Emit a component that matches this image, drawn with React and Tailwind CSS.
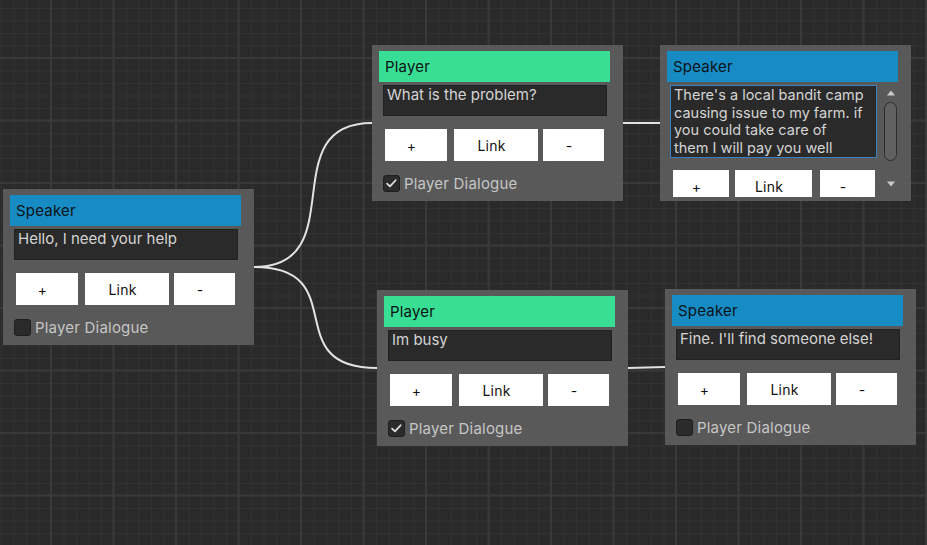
import React from "react";

const FONT = "font-['Inter','Noto_Sans',sans-serif]";

function Check() {
  return (
    <svg width="17" height="17" viewBox="0 0 17 17" className="block">
      <path d="M3.5 8.6 L6.8 11.8 L13.2 4.8" fill="none" stroke="#e2e2e2" strokeWidth="2" strokeLinecap="round" strokeLinejoin="round" />
    </svg>
  );
}

function Buttons({ widths = [62, 84, 61], gaps = [7, 5], h = 32 }) {
  const labels = ["+", "Link", "-"];
  return (
    <div className="flex">
      {labels.map((l, i) => (
        <div
          key={l}
          style={{ width: widths[i], height: h, marginLeft: i === 0 ? 0 : gaps[i - 1] }}
          className="bg-white flex items-center justify-center pr-[9px] text-[14px] tracking-[0.2px] text-[#111] shrink-0"
        >
          {l}
        </div>
      ))}
    </div>
  );
}

function Node({ left, top, title, color, text, checked }) {
  return (
    <div
      style={{ left, top }}
      className={`absolute w-[251px] h-[156px] bg-[rgba(92,92,92,0.93)] pl-[7px] pt-[6px] ${FONT}`}
    >
      <div className={`w-[231px] h-[31px] ${color} flex items-center pl-[6px] pt-[2px] text-[15px] tracking-[0.2px] text-[#0c1216]`}>
        {title}
      </div>
      <div className="ml-[4px] mt-[3px] w-[224px] h-[31px] bg-[#2a2a2a] border border-[#212121] pl-[3px] text-[15px] leading-[18px] text-[#d4d4d4]">
        {text}
      </div>
      <div className="ml-[6px] mt-[13px]">
        <Buttons />
      </div>
      <div className="ml-[4px] mt-[13px] flex items-center">
        <div className="w-[17px] h-[17px] rounded-[3px] bg-[#2b2b2b] border border-[#1e1e1e] flex items-center justify-center">
          {checked ? <Check /> : null}
        </div>
        <span className="ml-[4px] text-[15px] tracking-[0.2px] text-[#c6c6c6] leading-[18px] mt-[1px]">Player Dialogue</span>
      </div>
    </div>
  );
}

function ScrollNode({ left, top }) {
  return (
    <div
      style={{ left, top }}
      className={`absolute w-[251px] h-[156px] bg-[rgba(92,92,92,0.93)] pl-[7px] pt-[6px] ${FONT}`}
    >
      <div className="w-[231px] h-[31px] bg-[#178bc4] flex items-center pl-[6px] pt-[2px] text-[15px] tracking-[0.2px] text-[#0c1216]">
        Speaker
      </div>
      <div className="mt-[3px] h-[112px] flex">
        <div className="w-[214px] overflow-hidden">
          <div className="ml-[3px] w-[207px] h-[73px] bg-[#2a2a2a] border border-[#3a7fc0] pl-[3px] text-[14.5px] leading-[17.7px] text-[#d4d4d4] whitespace-nowrap">
            There's a local bandit camp
            <br />
            causing issue to my farm. if
            <br />
            you could take care of
            <br />
            them I will pay you well
          </div>
          <div className="ml-[6px] mt-[12px]">
            <Buttons widths={[56, 77, 55]} gaps={[6, 8]} />
          </div>
        </div>
        <div className="ml-[2px] w-[15px] flex flex-col items-center">
          <svg width="10" height="8" viewBox="0 0 10 8" className="mt-[4px]">
            <path d="M1 6.5 L5 1.5 L9 6.5 Z" fill="#c9c9c9" />
          </svg>
          <div className="mt-[5px] w-[13px] h-[59px] rounded-full bg-[#616161] border border-[#2c2c2c]" />
          <div className="flex-1" />
          <svg width="10" height="8" viewBox="0 0 10 8" className="mb-[9px]">
            <path d="M1 1.5 L5 6.5 L9 1.5 Z" fill="#c9c9c9" />
          </svg>
        </div>
      </div>
    </div>
  );
}

export default function App() {
  return (
    <div className="relative w-[927px] h-[545px] overflow-hidden bg-[#2a2a2a] bg-[linear-gradient(to_right,#393939_2px,transparent_2px),linear-gradient(to_bottom,#393939_2px,transparent_2px),linear-gradient(to_right,#323232_1px,transparent_1px),linear-gradient(to_bottom,#323232_1px,transparent_1px)] bg-[length:62.5px_62.5px,62.5px_62.5px,12.5px_12.5px,12.5px_12.5px] bg-[position:50px_57px,50px_57px,1px_8px,1px_8px]">
      <svg width="927" height="545" className="absolute left-0 top-0 pointer-events-none">
        <g fill="none" stroke="#e2e2e2" strokeWidth="2">
          <path d="M254 267 C354 267 272 123 372 123" />
          <path d="M254 267 C354 267 277 368 377 368" />
          <path d="M623 123 L660 123" />
          <path d="M628 368 L665 367" />
        </g>
      </svg>
      <Node left={3} top={189} title="Speaker" color="bg-[#178bc4]" text="Hello, I need your help" checked={false} />
      <Node left={372} top={45} title="Player" color="bg-[#38de93]" text="What is the problem?" checked={true} />
      <ScrollNode left={660} top={45} />
      <Node left={377} top={290} title="Player" color="bg-[#38de93]" text="Im busy" checked={true} />
      <Node left={665} top={289} title="Speaker" color="bg-[#178bc4]" text="Fine. I'll find someone else!" checked={false} />
    </div>
  );
}
